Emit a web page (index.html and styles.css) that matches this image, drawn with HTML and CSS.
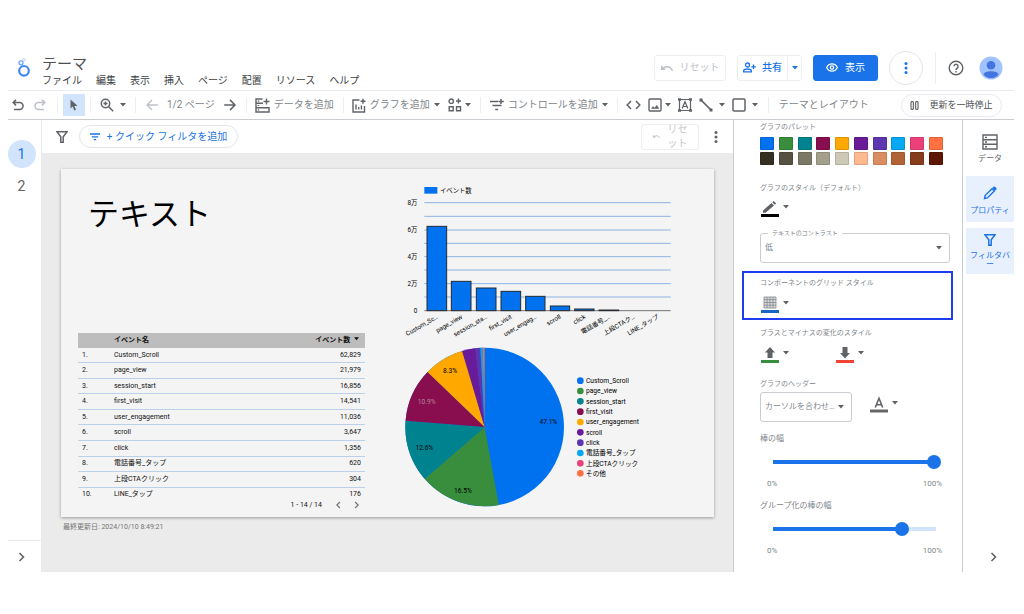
FILE: index.html
```html
<!DOCTYPE html>
<html lang="ja">
<head>
<meta charset="utf-8">
<title>テーマ</title>
<link rel="stylesheet" href="styles.css">
</head>
<body>
<svg class="defs" width="0" height="0" aria-hidden="true">
  <symbol id="caret" viewBox="0 0 6 4"><path d="M0 0h6L3 3.5z" fill="currentColor"/></symbol>
  <symbol id="undo" viewBox="0 0 12 12"><path d="M4 .8L1.2 3.6 4 6.4M1.4 3.6h6.2a3.4 3.4 0 0 1 0 6.9H2" fill="none" stroke="currentColor" stroke-width="1.5"/></symbol>
  <symbol id="reset" viewBox="0 0 12 8"><path d="M0 1v5h5L3.200 4.300A5 5 0 0 1 10.800 7.200L12 6.700A6.200 6.200 0 0 0 2.200 3.200z" fill="currentColor"/></symbol>
  <symbol id="funnel" viewBox="0 0 12 12"><path d="M.9.8h10.200L7.200 5.700v5.500H4.800V5.700z" fill="none" stroke="currentColor" stroke-width="1.500"/></symbol>
  <symbol id="chevron" viewBox="0 0 8 10"><path d="M1.500 1l4 4-4 4" fill="none" stroke="currentColor" stroke-width="1.600"/></symbol>
  <symbol id="dots" viewBox="0 0 4 12"><g fill="currentColor"><circle cx="2" cy="1.500" r="1.500"/><circle cx="2" cy="6" r="1.500"/><circle cx="2" cy="10.500" r="1.500"/></g></symbol>
</svg>
<div class="app">
  <header class="header">
    <svg class="logo" width="16" height="22" viewBox="0 0 16 22" fill="none"><circle cx="8" cy="14.800" r="4.800" stroke="#4285f4" stroke-width="2.200"/><circle cx="5" cy="6.800" r="2" stroke="#6ba4f8" stroke-width="1.300"/><circle cx="7.800" cy="3.800" r="1.300" stroke="#b7d2fb"/></svg>
    <div class="heading">
      <h1 class="doc-title">テーマ</h1>
      <nav class="menu">
        <button>ファイル</button><button>編集</button><button>表示</button><button>挿入</button><button>ページ</button><button>配置</button><button>リソース</button><button>ヘルプ</button>
      </nav>
    </div>
    <div class="actions">
      <button class="btn reset" disabled><svg width="12" height="8"><use href="#reset"/></svg>リセット</button>
      <div class="split">
        <button class="btn share"><svg width="13" height="11" viewBox="0 0 13 11" fill="none" stroke="currentColor" stroke-width="1.300"><circle cx="4.500" cy="3" r="2"/><path d="M.7 9.800V8.500C1.500 6.500 7.500 6.500 8.300 8.500v1.300zM10.500 2.500v4.600M8.200 4.800h4.600"/></svg>共有</button>
        <button class="btn share-more" aria-label="共有オプション"><svg width="6" height="4"><use href="#caret"/></svg></button>
      </div>
      <button class="btn view"><svg width="12" height="9" viewBox="0 0 12 9" fill="none" stroke="currentColor" stroke-width="1.200"><path d="M.7 4.500C2.800-.4 9.200-.4 11.300 4.500 9.200 9.400 2.800 9.400.7 4.500z"/><circle cx="6" cy="4.500" r="1.700"/></svg>表示</button>
      <button class="round" aria-label="その他"><svg width="4" height="12"><use href="#dots"/></svg></button>
      <span class="tall-rule"></span>
      <button class="plain" aria-label="ヘルプ"><svg width="16" height="16" viewBox="0 0 16 16" fill="none" stroke="#5f6368" stroke-width="1.400"><circle cx="8" cy="8" r="6.800"/><path d="M5.900 6.300a2.100 2.100 0 1 1 3.300 1.800C8.300 8.700 8 9 8 10M8 11v1.400"/></svg></button>
      <button class="plain avatar" aria-label="アカウント"><svg width="24" height="24" viewBox="0 0 24 24"><circle cx="12" cy="12" r="11.500" fill="#a0c3ff"/><circle cx="12" cy="9.200" r="4.300" fill="#4374e0"/><path d="M4.500 18.500C5 14 19 14 19.500 18.500 15.500 23.500 8.500 23.500 4.500 18.500z" fill="#4374e0"/></svg></button>
    </div>
  </header>

  <div class="toolbar">
    <div class="group first">
      <button class="plain" aria-label="元に戻す"><svg width="12" height="12"><use href="#undo"/></svg></button>
      <button class="plain faint flip" aria-label="やり直す"><svg width="12" height="12"><use href="#undo"/></svg></button>
    </div>
    <div class="group cursor-group"><button class="plain cursor" aria-label="選択"><svg width="8" height="12" viewBox="0 0 8 12"><path d="M.5.500v9l2.200-2 1.600 4 1.700-.7-1.600-3.900 3.100-.2z" fill="currentColor"/></svg></button></div>
    <div class="group zoom-group">
      <button class="plain gap6" aria-label="ズーム"><svg width="14" height="14" viewBox="0 0 14 14" fill="none" stroke="currentColor" stroke-width="1.500"><circle cx="5.500" cy="5.500" r="4.200"/><path d="M8.700 8.700l4.500 4.500M5.500 3.500v4M3.500 5.500h4"/></svg><svg width="6" height="4"><use href="#caret"/></svg></button>
    </div>
    <div class="group pages">
      <button class="plain faint" aria-label="前のページ"><svg width="12" height="12" viewBox="0 0 12 12" fill="none" stroke="currentColor" stroke-width="1.400"><path d="M11.800 6H1.200M6 .900L1 6l5 5.100"/></svg></button>
      <span>1/2 ページ</span>
      <button class="plain" aria-label="次のページ"><svg width="12" height="12" viewBox="0 0 12 12" fill="none" stroke="currentColor" stroke-width="1.500"><path d="M.2 6h10.600M6 .900L11 6l-5 5.100"/></svg></button>
    </div>
    <div class="group add-data">
      <button class="plain gap4"><svg width="15" height="15" viewBox="0 0 15 15" fill="none" stroke="currentColor" stroke-width="1.400"><path d="M7.500 1H1v13h13V9.700H1M1 5.300h7M11.500.500v6M8.500 3.500h6"/><path d="M2.700 3.200h1.500M2.700 7.500h1.500M2.700 11.900h1.500" stroke-width="1.200"/></svg><span>データを追加</span></button>
    </div>
    <div class="group add-chart">
      <button class="plain gap4"><svg width="14" height="15" viewBox="0 0 14 15" fill="none" stroke="currentColor" stroke-width="1.400"><path d="M7.500 2H1v12h11.500V8M4 6.500v5M6.700 9v2.500M9.400 7.500v4M11 .700v5M8.500 3.200h5"/></svg><span>グラフを追加</span><svg width="6" height="4"><use href="#caret"/></svg></button>
      <button class="plain gap3" aria-label="コンポーネント"><svg width="14" height="14" viewBox="0 0 14 14" fill="none" stroke="currentColor" stroke-width="1.400"><circle cx="3.200" cy="3.200" r="2.200"/><path d="M10.500.500v5M8 3h5M1.200 8.800h4v4h-4zM8.500 8.800h4v4h-4z"/></svg><svg width="6" height="4"><use href="#caret"/></svg></button>
    </div>
    <div class="group add-control">
      <button class="plain gap4"><svg width="14" height="12" viewBox="0 0 14 12" fill="none" stroke="currentColor" stroke-width="1.500"><path d="M0 2.500h8M2.500 6.500h9M5.200 10.500h3M11 0v5M8.500 2.500h5.300"/></svg><span>コントロールを追加</span><svg width="6" height="4"><use href="#caret"/></svg></button>
    </div>
    <div class="group shapes">
      <button class="plain" aria-label="埋め込み"><svg width="15" height="10" viewBox="0 0 15 10" fill="none" stroke="currentColor" stroke-width="1.500"><path d="M5 1L1.200 5 5 9M10 1l3.800 4L10 9"/></svg></button>
      <button class="plain gap3" aria-label="画像"><svg width="14" height="14" viewBox="0 0 14 14"><rect x="1" y="1" width="12" height="12" rx="1" fill="none" stroke="currentColor" stroke-width="1.400"/><path d="M3 10.800l2-2.600 1.600 1.600L8.800 7l2.500 3.800z" fill="currentColor"/></svg><svg width="6" height="4"><use href="#caret"/></svg></button>
      <button class="plain" aria-label="テキスト"><svg width="14" height="14" viewBox="0 0 14 14" fill="none" stroke="currentColor"><path d="M1.500 1.500h11v11h-11zM4.200 10.500L7 3.500l2.800 7M5 8.500h4" stroke-width="1.200"/><path d="M0 1.500h3M11 1.500h3M0 12.500h3M11 12.500h3" stroke-width="2.400"/></svg></button>
      <button class="plain gap6" aria-label="線"><svg width="14" height="14" viewBox="0 0 14 14"><path d="M2 2l10 10" stroke="currentColor" stroke-width="1.700"/><path d="M.5.500h3v3h-3zM10.500 10.500h3v3h-3z" fill="currentColor"/></svg><svg width="6" height="4"><use href="#caret"/></svg></button>
      <button class="plain gap6" aria-label="図形"><svg width="14" height="14" viewBox="0 0 14 14"><rect x="1" y="1" width="12" height="12" rx="1" fill="none" stroke="currentColor" stroke-width="1.500"/></svg><svg width="6" height="4"><use href="#caret"/></svg></button>
    </div>
    <div class="group theme"><button class="plain"><span>テーマとレイアウト</span></button></div>
    <button class="pause"><svg width="9" height="9" viewBox="0 0 9 9" fill="none" stroke="currentColor"><path d="M1 .700h2.300v7.600H1zM5.700.700H8v7.600H5.700z"/></svg>更新を一時停止</button>
  </div>

  <div class="main">
    <aside class="rail">
      <button class="page-num current">1</button>
      <button class="page-num">2</button>
      <button class="plain rail-toggle" aria-label="開く"><svg width="8" height="10"><use href="#chevron"/></svg></button>
    </aside>

    <main class="work">
      <div class="filterbar">
        <svg class="grey" width="12" height="12"><use href="#funnel"/></svg>
        <button class="quick"><svg width="10" height="8" viewBox="0 0 10 8" stroke="currentColor" stroke-width="1.300"><path d="M0 1h10M1.800 3.800h6.400M3.800 6.600h2.400"/></svg>+ クイック フィルタを追加</button>
        <button class="btn small-reset" disabled><svg width="7" height="5"><use href="#reset"/></svg><span>リセット</span></button>
        <button class="plain" aria-label="その他の操作"><svg width="4" height="12"><use href="#dots"/></svg></button>
      </div>
      <div class="canvas">
        <section class="report">
          <div class="left">
            <h2 class="report-title">テキスト</h2>
            <table class="events">
              <thead><tr><th class="no"></th><th>イベント名</th><th class="num">イベント数 <svg width="5" height="4"><use href="#caret"/></svg></th></tr></thead>
              <tbody>
                <tr><td>1.</td><td>Custom_Scroll</td><td class="num">62,829</td></tr>
                <tr><td>2.</td><td>page_view</td><td class="num">21,979</td></tr>
                <tr><td>3.</td><td>session_start</td><td class="num">16,856</td></tr>
                <tr><td>4.</td><td>first_visit</td><td class="num">14,541</td></tr>
                <tr><td>5.</td><td>user_engagement</td><td class="num">11,036</td></tr>
                <tr><td>6.</td><td>scroll</td><td class="num">3,647</td></tr>
                <tr><td>7.</td><td>click</td><td class="num">1,356</td></tr>
                <tr><td>8.</td><td>電話番号_タップ</td><td class="num">620</td></tr>
                <tr><td>9.</td><td>上段CTAクリック</td><td class="num">304</td></tr>
                <tr><td>10.</td><td>LINE_タップ</td><td class="num">176</td></tr>
              </tbody>
            </table>
            <div class="pager"><span>1 - 14 / 14</span><button class="plain flip" aria-label="前へ"><svg width="6" height="8"><use href="#chevron"/></svg></button><button class="plain" aria-label="次へ"><svg width="6" height="8"><use href="#chevron"/></svg></button></div>
          </div>
          <div class="right">
            <svg class="chart bars" viewBox="0 0 840 516" role="img" aria-label="イベント数">
              <rect x="73" y="51" width="39" height="20" fill="#0072f0"/>
              <text x="120" y="68" class="t19">イベント数</text>
              <path class="grid" d="M73 98h739M73 139h739M73 180h739M73 220h739M73 260h739M73 300h739M73 341h739M73 381h739"/>
              <g class="t19" text-anchor="end"><text x="52" y="105">8万</text><text x="52" y="186">6万</text><text x="52" y="267">4万</text><text x="52" y="348">2万</text><text x="52" y="429">0</text></g>
              <g fill="#0072f0" stroke="#252b33" stroke-width="3">
                <rect x="81" y="169" width="59" height="253"/><rect x="154" y="334" width="59" height="88"/><rect x="229" y="354" width="59" height="68"/><rect x="303" y="364" width="59" height="58"/><rect x="377" y="379" width="58" height="43"/><rect x="451" y="408" width="58" height="14"/><rect x="524" y="417" width="58" height="5"/><rect x="597" y="420" width="59" height="2"/>
              </g>
              <path d="M73 422h739" stroke="#333" stroke-width="2"/>
              <g class="t19" text-anchor="end">
                <text transform="translate(116 444) rotate(-30)">Custom_Sc…</text><text transform="translate(189 444) rotate(-30)">page_view</text><text transform="translate(263 444) rotate(-30)">session_sta…</text><text transform="translate(337 444) rotate(-30)">first_visit</text><text transform="translate(411 444) rotate(-30)">user_engag…</text><text transform="translate(484 444) rotate(-30)">scroll</text><text transform="translate(558 444) rotate(-30)">click</text><text transform="translate(632 444) rotate(-30)">電話番号_…</text><text transform="translate(706 444) rotate(-30)">上段CTAク…</text><text transform="translate(778 444) rotate(-30)">LINE_タップ</text>
              </g>
            </svg>
            <svg class="chart pie" viewBox="0 0 840 504" role="img" aria-label="イベントの割合">
              <g transform="rotate(-90 254 255)" fill="none" stroke-width="238">
                <circle cx="254" cy="255" r="119" stroke="#0072f0"/>
                <circle cx="254" cy="255" r="119" pathLength="1000" stroke="#388e3c" stroke-dasharray="165 835" stroke-dashoffset="-471"/>
                <circle cx="254" cy="255" r="119" pathLength="1000" stroke="#00838f" stroke-dasharray="126 874" stroke-dashoffset="-636"/>
                <circle cx="254" cy="255" r="119" pathLength="1000" stroke="#880e4f" stroke-dasharray="109 891" stroke-dashoffset="-762"/>
                <circle cx="254" cy="255" r="119" pathLength="1000" stroke="#ffa800" stroke-dasharray="83 917" stroke-dashoffset="-871"/>
              </g>
              <path d="M254 255L186 27A238 238 0 0 1 226 19z" fill="#6a1b9a"/>
              <path d="M254 255L226 19L241 17z" fill="#5e35b1"/>
              <path d="M254 255L241 17H248z" fill="#03a9f4"/>
              <path d="M254 255L248 17H254z" fill="#e07060"/>
              <g class="t20" text-anchor="middle"><text x="445" y="246">47.1%</text><text x="189" y="452">16.5%</text><text x="73" y="324">12.6%</text><text x="80" y="187" class="pale">10.9%</text><text x="150" y="94">8.3%</text></g>
              <circle cx="541" cy="116" r="10" fill="#0072f0"/><circle cx="541" cy="147" r="10" fill="#388e3c"/><circle cx="541" cy="178" r="10" fill="#00838f"/><circle cx="541" cy="209" r="10" fill="#880e4f"/><circle cx="541" cy="240" r="10" fill="#ffa800"/><circle cx="541" cy="271" r="10" fill="#6a1b9a"/><circle cx="541" cy="302" r="10" fill="#5e35b1"/><circle cx="541" cy="333" r="10" fill="#03a9f4"/><circle cx="541" cy="364" r="10" fill="#ec407a"/><circle cx="541" cy="394" r="10" fill="#ff7043"/>
              <g class="t20"><text x="558" y="123">Custom_Scroll</text><text x="558" y="154">page_view</text><text x="558" y="185">session_start</text><text x="558" y="216">first_visit</text><text x="558" y="247">user_engagement</text><text x="558" y="278">scroll</text><text x="558" y="309">click</text><text x="558" y="340">電話番号_タップ</text><text x="558" y="371">上段CTAクリック</text><text x="558" y="401">その他</text></g>
            </svg>
          </div>
        </section>
        <p class="updated">最終更新日: 2024/10/10 8:49:21</p>
      </div>
    </main>

    <aside class="panel">
      <section class="sec s-palette">
        <h3>グラフのパレット</h3>
        <div class="palette">
          <i class="c1"></i><i class="c2"></i><i class="c3"></i><i class="c4"></i><i class="c5"></i><i class="c6"></i><i class="c7"></i><i class="c8"></i><i class="c9"></i><i class="c10"></i>
          <i class="c11"></i><i class="c12"></i><i class="c13"></i><i class="c14"></i><i class="c15"></i><i class="c16"></i><i class="c17"></i><i class="c18"></i><i class="c19"></i><i class="c20"></i>
        </div>
      </section>
      <section class="sec s-style">
        <h3>グラフのスタイル（デフォルト）</h3>
        <button class="plain picker" aria-label="線の色"><svg width="20" height="18" viewBox="0 0 20 18"><path d="M3 12.800V10.500L11.500 3l2.500 2.500-8.500 7.300zM12.300 2.200L13.700 1l2.500 2.500-1.400 1.300z" fill="#5f6368"/><path d="M1 15.500h18" stroke="#000" stroke-width="3"/></svg><svg width="6" height="4"><use href="#caret"/></svg></button>
        <div class="field"><label for="contrast">テキストのコントラスト</label><select id="contrast"><option>低</option></select><svg width="6" height="4"><use href="#caret"/></svg></div>
      </section>
      <section class="sec marked">
        <h3>コンポーネントのグリッド スタイル</h3>
        <button class="plain picker" aria-label="グリッドの色"><svg width="20" height="18" viewBox="0 0 20 18"><path d="M4 1h12v11H4zM4 3.700h12M4 6.500h12M4 9.200h12M7 1v11M10 1v11M13 1v11" fill="#ddd" stroke="#80868b" stroke-width=".8"/><path d="M1 15.500h18" stroke="#1967c5" stroke-width="3"/></svg><svg width="6" height="4"><use href="#caret"/></svg></button>
      </section>
      <section class="sec s-change">
        <h3>プラスとマイナスの変化のスタイル</h3>
        <div class="pair">
          <button class="plain picker" aria-label="プラスの色"><svg width="20" height="18" viewBox="0 0 20 18"><path d="M10 1l5 5.500h-2.500V12h-5V6.500H5z" fill="#5f6368"/><path d="M1 15.500h18" stroke="#388e3c" stroke-width="3"/></svg><svg width="6" height="4"><use href="#caret"/></svg></button>
          <button class="plain picker" aria-label="マイナスの色"><svg width="20" height="18" viewBox="0 0 20 18"><path d="M10 12.500L5 7h2.500V1h5v6H15z" fill="#5f6368"/><path d="M1 15.500h18" stroke="#f44336" stroke-width="3"/></svg><svg width="6" height="4"><use href="#caret"/></svg></button>
        </div>
      </section>
      <section class="sec s-head">
        <h3><label for="chart-head">グラフのヘッダー</label></h3>
        <div class="head-row">
          <div class="field narrow"><select id="chart-head"><option>カーソルを合わせ…</option></select><svg width="6" height="4"><use href="#caret"/></svg></div>
          <button class="plain picker" aria-label="文字の色"><svg width="20" height="18" viewBox="0 0 20 18"><path d="M6.300 11.500L10 2.300l3.700 9.200M7.500 8.800h5" fill="none" stroke="#5f6368" stroke-width="1.600"/><path d="M1 15h18" stroke="#666" stroke-width="3"/></svg><svg width="6" height="4"><use href="#caret"/></svg></button>
        </div>
      </section>
      <section class="sec slider">
        <label for="bar">棒の幅</label>
        <input id="bar" type="range" min="0" max="100" value="100" style="--fill:96%">
        <div class="scale"><span>0%</span><span>100%</span></div>
      </section>
      <section class="sec slider">
        <label for="group">グループ化の棒の幅</label>
        <input id="group" type="range" min="0" max="100" value="79" style="--fill:79%">
        <div class="scale"><span>0%</span><span>100%</span></div>
      </section>
    </aside>

    <nav class="tabs">
      <button class="tab"><svg width="16" height="16" viewBox="0 0 16 16" fill="none" stroke="currentColor" stroke-width="1.400"><path d="M1 1h14v14H1zM1 5.700h14M1 10.300h14M3 3.400h2M3 8h2M3 12.700h2"/></svg>データ</button>
      <button class="tab on prop"><svg width="16" height="16" viewBox="0 0 16 16"><path d="M2.500 13.500l.6-2.900L10 3.700l2.300 2.300-6.900 6.900z" fill="none" stroke="currentColor" stroke-width="1.400"/><path d="M10.200 3l1.300-1.300q.8-.6 1.500 0l1.300 1.300q.6.700 0 1.500L13 5.800z" fill="currentColor"/></svg>プロパティ</button>
      <button class="tab on"><svg width="12" height="12"><use href="#funnel"/></svg>フィルタバー</button>
      <button class="plain tabs-toggle" aria-label="閉じる"><svg width="8" height="10"><use href="#chevron"/></svg></button>
    </nav>
  </div>
</div>
</body>
</html>
```
FILE: styles.css
```css
* { box-sizing: border-box; }
body { margin: 0; background: #fff; color: #5f6368; font: 10px/14px Roboto, "Noto Sans CJK JP", sans-serif; }
h1, h2, h3, p { margin: 0; font-weight: 400; }
svg { display: block; flex: none; }
.defs { position: absolute; }
button, select, input { font: inherit; color: inherit; margin: 0; padding: 0; }
button { display: flex; align-items: center; justify-content: center; background: none; border: 0; white-space: nowrap; }
.app { padding: 48px 10px 42px 8px; }
.flip svg { transform: scaleX(-1); }
.faint { color: #bdc1c6; }
.gap3 { gap: 3px; }
.gap4 { gap: 4px; }
.gap6 { gap: 6px; }

.header { display: flex; height: 43px; border-bottom: 1px solid #e8eaed; }
.logo { margin: 8px 10px 0 8px; }
.heading { flex: 1; padding-top: 6px; }
.doc-title { font-size: 15px; line-height: 21px; color: #4c4f53; }
.menu { display: flex; gap: 14px; line-height: 12px; color: #3c4043; }
.actions { display: flex; align-items: center; height: 39px; }
.btn { height: 26px; border: 1px solid #eceef0; border-radius: 3px; }
.reset { width: 72px; gap: 7px; color: #bdc1c6; margin-right: 11px; }
.split { display: flex; margin-right: 11px; color: #1a73e8; font-weight: 500; }
.share { width: 51px; gap: 6px; border-radius: 3px 0 0 3px; }
.share-more { width: 14px; border-left: 0; border-radius: 0 3px 3px 0; }
.view { width: 65px; gap: 7px; background: #1a73e8; border-color: #1a73e8; color: #fff; margin-right: 11px; }
.round { width: 34px; height: 34px; border: 1px solid #e3e5e8; border-radius: 50%; color: #1a73e8; }
.tall-rule { width: 1px; height: 32px; background: #eceef0; margin: 0 12px; }
.avatar { margin: 0 11px 0 15px; }

.toolbar { display: flex; align-items: center; height: 29px; border-bottom: 1px solid #c9ccd0; color: #5f6368; }
.group { display: flex; align-items: center; height: 16px; padding: 0 10px; border-right: 1px solid #eceef0; flex: none; }
.group span { color: #80868b; }
.first { padding: 0 11px 0 4px; gap: 10px; }
.cursor-group { padding: 0 5px; }
.cursor { width: 22px; height: 22px; background: #d2e3fc; }
.zoom-group { padding: 0 9px; }
.pages { gap: 9px; }
.add-data { padding: 0 9px 0 8px; }
.add-chart { gap: 8px; padding: 0 9px 0 8px; }
.add-control { padding: 0 9px; }
.shapes { gap: 7px; padding: 0 10px 0 8px; }
.theme { border: 0; }
.pause { height: 23px; width: 101px; gap: 10px; margin-left: auto; margin-right: 12px; border: 1px solid #e8eaed; border-radius: 12px; font-size: 9px; color: #4c4f53; }

.main { display: grid; grid-template-columns: 34px 1fr 230px 51px; min-height: 452px; }
.rail { display: flex; flex-direction: column; align-items: center; padding-top: 20px; border-right: 1px solid #e8eaed; }
.page-num { width: 28px; height: 28px; border-radius: 50%; font-size: 14px; margin: 0 6px 4px 0; }
.current { background: #d2e3fc; color: #1a73e8; }
.rail-toggle { margin-top: auto; width: 100%; height: 32px; padding-right: 6px; border-top: 1px solid #e8eaed; }

.work { display: flex; flex-direction: column; min-width: 0; }
.filterbar { display: flex; align-items: center; height: 33px; padding: 0 15px 0 14px; }
.grey { color: #5f6368; }
.quick { height: 23px; width: 159px; gap: 7px; margin-left: 11px; border: 1px solid #e3e5e8; border-radius: 12px; color: #1a73e8; }
.small-reset { width: 58px; margin-left: auto; margin-right: 15px; gap: 8px; padding: 0 8px; color: #c4c7cb; white-space: normal; text-align: left; }
.small-reset span { width: 20px; }
.canvas { flex: 1; background: #ebebeb; padding: 16px 19px 0; }
.report { display: grid; grid-template-columns: 287px 1fr; padding: 0 30px 0 17px; gap: 35px; height: 348px; background: #f4f4f4; box-shadow: 0 1px 3px rgba(0, 0, 0, .35); color: #111; }
.left { padding-top: 24px; }
.right { padding-top: 1px; }
.report-title { height: 140px; padding-left: 10px; font-size: 31px; line-height: 44px; color: #000; }
.events { width: 100%; height: 169px; border-collapse: collapse; font-size: 7px; line-height: 9px; }
.events th { height: 15px; padding: 0 6px 0 0; background: #bdbdbd; text-align: left; font-weight: 700; }
.events td { padding: 0 4px 0 0; border-bottom: 1px solid #bcd0ea; }
.events tr:last-child td { border: 0; }
.events td:first-child { padding-left: 4px; }
.events .no { width: 36px; }
.events .num { text-align: right; }
.events th svg { display: inline-block; margin-left: 2px; vertical-align: 1px; }
.pager { display: flex; justify-content: flex-end; align-items: center; gap: 13px; height: 6px; padding-right: 5px; font-size: 7px; line-height: 6px; }
.pager button { color: #757575; }
.chart { width: 280px; overflow: visible; }
.bars { height: 172px; }
.pie { height: 168px; }
.chart text { font-family: Roboto, "Noto Sans CJK JP", sans-serif; }
.t19 { font-size: 19px; }
.t20 { font-size: 20px; }
.pale { fill: #b58a9e; }
.grid { stroke: #8fb3e3; stroke-width: 3; }
.updated { padding: 5px 0 0 2px; font-size: 7px; line-height: 10px; color: #757575; }

.panel { padding: 0 9px 0 8px; border-left: 1px solid #c9ccd0; border-right: 1px solid #c9ccd0; color: #80868b; }
.sec { padding: 0 3px 0 18px; }
.sec h3 { font-size: 7px; line-height: 10px; }
.s-palette { padding-top: 2px; }
.palette { display: grid; grid-template-columns: repeat(10, 14px); justify-content: space-between; gap: 2px 0; padding: 5px 7px 0 0; }
.palette i { height: 13px; border: 1px solid rgba(0, 0, 0, .12); border-radius: 1px; }
.c1 { background: #0072f0; } .c2 { background: #388e3c; } .c3 { background: #00838f; } .c4 { background: #880e4f; } .c5 { background: #ffa800; }
.c6 { background: #6a1b9a; } .c7 { background: #5e35b1; } .c8 { background: #03a9f4; } .c9 { background: #ec407a; } .c10 { background: #ff7043; }
.c11 { background: #333022; } .c12 { background: #575141; } .c13 { background: #7d7766; } .c14 { background: #a49e8c; } .c15 { background: #cec8b6; }
.c16 { background: #ffb991; } .c17 { background: #da8d60; } .c18 { background: #b26336; } .c19 { background: #873c1b; } .c20 { background: #5c1602; }
.s-style { padding-top: 18px; }
.picker { gap: 3px; margin-top: 7px; color: #5f6368; }
.picker svg + svg { margin-bottom: 4px; }
.field { position: relative; display: flex; align-items: center; height: 30px; margin-top: 15px; }
.field label { position: absolute; top: -4px; left: 8px; padding: 0 4px; background: #fff; font-size: 6px; line-height: 8px; }
.field select { appearance: none; width: 100%; height: 30px; padding: 0 18px 0 4px; border: 1px solid #c9ccd0; border-radius: 3px; background: #fff; font-size: 8px; }
.field svg { position: absolute; right: 8px; pointer-events: none; color: #5f6368; }
.marked { margin-top: 8px; height: 49px; padding: 5px 0 0 16px; border: 2px solid #1f3df0; }
.marked .picker { margin-top: 8px; }
.s-change { padding-top: 8px; }
.s-change .picker { margin-top: 8px; }
.pair { display: flex; gap: 46px; }
.s-head { padding-top: 15px; }
.head-row { display: flex; gap: 17px; align-items: flex-start; }
.head-row .field { margin-top: 3px; }
.narrow { width: 92px; }
.narrow select { padding-right: 14px; }
.slider label { display: block; padding-top: 11px; font-size: 8px; line-height: 12px; }
.slider input { appearance: none; display: block; width: 168px; height: 14px; margin: 10px 0 0 13px; background: linear-gradient(#1a73e8, #1a73e8) 0 50% / var(--fill) 4px no-repeat, linear-gradient(#d2e3fc, #d2e3fc) 0 50% / 163px 4px no-repeat; }
.slider input::-webkit-slider-thumb { appearance: none; width: 14px; height: 14px; border-radius: 50%; background: #1a73e8; }
.slider .scale { display: flex; justify-content: space-between; padding: 10px 8px 0 7px; font-size: 8px; line-height: 10px; }

.tabs { display: flex; flex-direction: column; padding: 9px 0 10px 3px; gap: 6px; }
.tab { flex-direction: column; justify-content: flex-start; height: 46px; gap: 5px; padding: 6px 3px 0; font-size: 8px; line-height: 9px; white-space: normal; word-break: break-all; }
.tab:first-child { height: 41px; padding-top: 5px; gap: 4px; }
.tab.prop { padding-top: 9px; }
.on { background: #e8f0fe; color: #1a73e8; }
.tabs-toggle { margin: auto auto 0; height: 10px; padding-left: 8px; }
```
